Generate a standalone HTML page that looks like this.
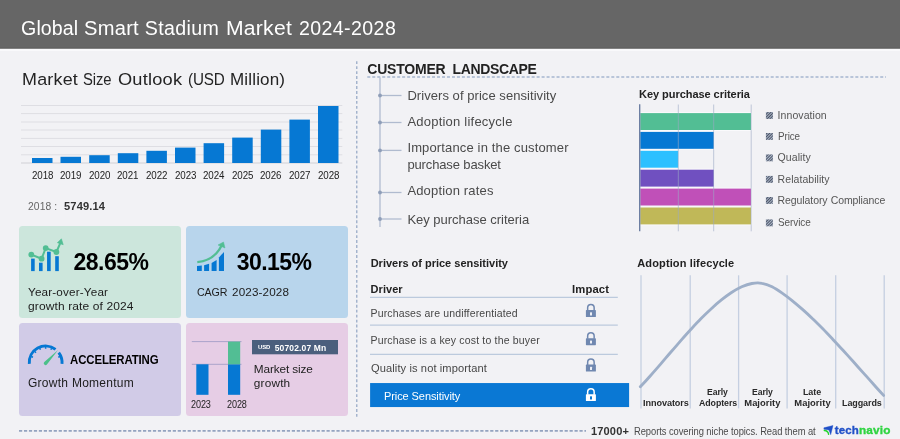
<!DOCTYPE html>
<html>
<head>
<meta charset="utf-8">
<title>Global Smart Stadium Market 2024-2028</title>
<style>
html,body{margin:0;padding:0;}
body{width:900px;height:439px;overflow:hidden;background:#f2f2f5;font-family:"Liberation Sans",sans-serif;position:relative;color:#333;}
#hdr{position:absolute;left:0;top:0;width:900px;height:48px;background:#666666;}
.t{position:absolute;white-space:nowrap;line-height:1;transform-origin:0 0;}
#txt{position:absolute;left:0;top:0;width:900px;height:439px;will-change:transform;}
svg{position:absolute;left:0;top:0;}
.card{position:absolute;border-radius:3.5px;}
</style>
</head>
<body>
<div class="card" style="left:19px;top:226px;width:162px;height:92px;background:#cce6dc;"></div>
<div class="card" style="left:186px;top:226px;width:162px;height:92px;background:#b8d5ec;"></div>
<div class="card" style="left:19px;top:323px;width:162px;height:93px;background:#d1cbe7;"></div>
<div class="card" style="left:186px;top:323px;width:162px;height:93px;background:#e6cde5;"></div>

<svg width="900" height="439" viewBox="0 0 900 439">
<defs>
<pattern id="hatch" width="2" height="2" patternUnits="userSpaceOnUse" patternTransform="rotate(-45)">
<rect width="2" height="2" fill="#b0bccf"/><rect width="2" height="1.05" fill="#4e5567"/>
</pattern>
</defs>
<rect x="0" y="0" width="900" height="48.8" fill="#666666"/>
<rect x="0" y="47.5" width="900" height="1.3" fill="#5e5e5e"/>
<rect x="0" y="48.8" width="900" height="2.2" fill="#f9f9fb"/>
<!-- market size bar chart -->
<g stroke="#dedee3" stroke-width="1">
<line x1="21" y1="105.5" x2="342.3" y2="105.5"/>
<line x1="21" y1="113.6" x2="342.3" y2="113.6"/>
<line x1="21" y1="122" x2="342.3" y2="122"/>
<line x1="21" y1="130" x2="342.3" y2="130"/>
<line x1="21" y1="138.4" x2="342.3" y2="138.4"/>
<line x1="21" y1="146.5" x2="342.3" y2="146.5"/>
<line x1="21" y1="154.8" x2="342.3" y2="154.8"/>
</g>
<line x1="21" y1="163" x2="342.3" y2="163" stroke="#cfcfd6" stroke-width="1.2"/>
<g fill="#0678d3">
<rect x="32" y="158" width="20.5" height="5"/>
<rect x="60.5" y="156.8" width="20.5" height="6.2"/>
<rect x="89.2" y="155.2" width="20.5" height="7.8"/>
<rect x="117.8" y="153.2" width="20.5" height="9.8"/>
<rect x="146.4" y="150.8" width="20.5" height="12.2"/>
<rect x="175" y="147.6" width="20.5" height="15.4"/>
<rect x="203.6" y="143.2" width="20.5" height="19.8"/>
<rect x="232.2" y="137.6" width="20.5" height="25.4"/>
<rect x="260.8" y="129.6" width="20.5" height="33.4"/>
<rect x="289.4" y="119.6" width="20.5" height="43.4"/>
<rect x="318" y="106" width="20.5" height="57"/>
</g>

<!-- dashed separators -->
<line x1="356.75" y1="61.2" x2="356.75" y2="416.7" stroke="#9fb0cb" stroke-width="1.4" stroke-dasharray="2.9 2.07"/>
<line x1="367.3" y1="77" x2="886" y2="77" stroke="#a6b6cf" stroke-width="1.3" stroke-dasharray="3 1.98"/>
<line x1="19" y1="430.9" x2="586" y2="430.9" stroke="#94a4c0" stroke-width="1.6" stroke-dasharray="3.2 1.76"/>

<!-- tree -->
<g stroke="#b0bbcf" stroke-width="1.3" fill="none">
<line x1="380" y1="77.6" x2="380" y2="227"/>
<line x1="380" y1="95.5" x2="401.5" y2="95.5"/>
<line x1="380" y1="122.5" x2="401.5" y2="122.5"/>
<line x1="380" y1="150.4" x2="401.5" y2="150.4"/>
<line x1="380" y1="192.5" x2="401.5" y2="192.5"/>
<line x1="380" y1="219" x2="401.5" y2="219"/>
</g>
<g fill="#8f9eb8">
<circle cx="380" cy="95.5" r="1.9"/><circle cx="380" cy="122.5" r="1.9"/><circle cx="380" cy="150.4" r="1.9"/><circle cx="380" cy="192.5" r="1.9"/><circle cx="380" cy="219" r="1.9"/>
</g>

<!-- key purchase criteria chart -->
<rect x="640.3" y="112.1" width="111.7" height="18.9" fill="#fafafc"/>
<rect x="640.3" y="130.9" width="74.6" height="18.9" fill="#fafafc"/>
<rect x="640.3" y="149.8" width="38.9" height="18.9" fill="#fafafc"/>
<rect x="640.3" y="168.7" width="74.6" height="18.9" fill="#fafafc"/>
<rect x="640.3" y="187.6" width="111.7" height="18.9" fill="#fafafc"/>
<rect x="640.3" y="206.5" width="111.7" height="18.9" fill="#fafafc"/>
<rect x="640.3" y="113.1" width="110.7" height="16.9" fill="#52be94"/>
<rect x="640.3" y="131.9" width="73.6" height="16.9" fill="#0678d3"/>
<rect x="640.3" y="150.8" width="37.9" height="16.9" fill="#2cc0ff"/>
<rect x="640.3" y="169.7" width="73.6" height="16.9" fill="#7050c0"/>
<rect x="640.3" y="188.6" width="110.7" height="16.9" fill="#c050b8"/>
<rect x="640.3" y="207.5" width="110.7" height="16.9" fill="#c0b858"/>
<g stroke="#9aa8c4" stroke-width="0.8" opacity="0.75">
<line x1="678.3" y1="104.5" x2="678.3" y2="231.3"/>
<line x1="713.7" y1="104.5" x2="713.7" y2="231.3"/>
<line x1="751.2" y1="104.5" x2="751.2" y2="231.3"/>
</g>
<line x1="639.7" y1="104.3" x2="639.7" y2="231.3" stroke="#66799f" stroke-width="1.3"/>
<rect x="765.9" y="112" width="7" height="6.9" fill="url(#hatch)"/><rect x="765.9" y="133" width="7" height="6.9" fill="url(#hatch)"/><rect x="765.9" y="154.4" width="7" height="6.9" fill="url(#hatch)"/><rect x="765.9" y="175.9" width="7" height="6.9" fill="url(#hatch)"/><rect x="765.9" y="197" width="7" height="6.9" fill="url(#hatch)"/><rect x="765.9" y="219.4" width="7" height="6.9" fill="url(#hatch)"/>

<!-- drivers table -->
<g stroke="#bccadd" stroke-width="1.2">
<line x1="370" y1="297.4" x2="617.8" y2="297.4"/>
<line x1="370" y1="325.2" x2="617.8" y2="325.2"/>
<line x1="370" y1="354.3" x2="617.8" y2="354.3"/>
</g>
<rect x="370.1" y="383.05" width="259" height="24" fill="#0a78d4"/>
<g transform="translate(585.9,303.8)"><path d="M1.75,6.8 V4 A3.25,3.25 0 0 1 8.25,4 V6.8" stroke="#7088b0" stroke-width="1.5" fill="none"/><rect x="0" y="6.3" width="10" height="6.9" rx="0.6" fill="#7088b0"/><rect x="4.1" y="8.4" width="2" height="3.2" rx="0.5" fill="#eef0f6"/></g>
<g transform="translate(585.9,332)"><path d="M1.75,6.8 V4 A3.25,3.25 0 0 1 8.25,4 V6.8" stroke="#7088b0" stroke-width="1.5" fill="none"/><rect x="0" y="6.3" width="10" height="6.9" rx="0.6" fill="#7088b0"/><rect x="4.1" y="8.4" width="2" height="3.2" rx="0.5" fill="#eef0f6"/></g>
<g transform="translate(585.9,358.3)"><path d="M1.75,6.8 V4 A3.25,3.25 0 0 1 8.25,4 V6.8" stroke="#7088b0" stroke-width="1.5" fill="none"/><rect x="0" y="6.3" width="10" height="6.9" rx="0.6" fill="#7088b0"/><rect x="4.1" y="8.4" width="2" height="3.2" rx="0.5" fill="#eef0f6"/></g>
<g transform="translate(585.9,387.9)"><path d="M1.75,6.8 V4 A3.25,3.25 0 0 1 8.25,4 V6.8" stroke="#ffffff" stroke-width="1.5" fill="none"/><rect x="0" y="6.3" width="10" height="6.9" rx="0.6" fill="#ffffff"/><rect x="4.1" y="8.4" width="2" height="3.2" rx="0.5" fill="#0a78d4"/></g>

<!-- adoption lifecycle -->
<g stroke="#c5cfe1" stroke-width="1.3">
<line x1="641" y1="275.3" x2="641" y2="408.4"/>
<line x1="690.2" y1="275.3" x2="690.2" y2="408.4"/>
<line x1="738.6" y1="275.3" x2="738.6" y2="408.4"/>
<line x1="787.1" y1="275.3" x2="787.1" y2="408.4"/>
<line x1="835.7" y1="275.3" x2="835.7" y2="408.4"/>
<line x1="884.2" y1="275.3" x2="884.2" y2="408.4"/>
</g>
<path d="M640.3,386.8 C643.7,383.2 647.1,379.5 650.4,375.7 C653.8,371.9 657.2,368.0 660.6,364.1 C664.0,360.2 667.3,356.2 670.7,352.3 C674.1,348.4 677.5,344.5 680.8,340.6 C684.2,336.8 687.6,333.0 691.0,329.3 C694.4,325.6 697.7,322.0 701.1,318.6 C704.5,315.1 707.9,311.8 711.3,308.7 C714.6,305.6 718.0,302.6 721.4,299.9 C724.8,297.2 728.2,294.7 731.5,292.5 C734.9,290.3 738.3,288.4 741.7,286.8 C745.1,285.3 748.4,284.1 751.8,283.5 C755.2,282.9 758.6,282.7 762.0,283.3 C765.3,283.8 768.7,285.1 772.1,286.8 C775.5,288.6 778.8,290.8 782.2,293.1 C785.6,295.5 789.0,298.0 792.4,300.8 C795.7,303.5 799.1,306.4 802.5,309.4 C805.9,312.4 809.3,315.5 812.6,318.8 C816.0,322.0 819.4,325.4 822.8,328.8 C826.2,332.3 829.5,335.8 832.9,339.4 C836.3,343.0 839.7,346.6 843.0,350.3 C846.4,354.0 849.8,357.8 853.2,361.5 C856.6,365.3 859.9,369.1 863.3,372.9 C866.7,376.6 870.1,380.4 873.5,384.2 C876.8,388.0 880.2,391.7 883.6,395.4" fill="none" stroke="#9eafc8" stroke-width="2.85" stroke-linecap="round"/>

<!-- card 4 mini chart -->
<line x1="191.8" y1="341.6" x2="241.5" y2="341.6" stroke="#aba3ca" stroke-width="1"/>
<line x1="191.8" y1="364.3" x2="241.5" y2="364.3" stroke="#aba3ca" stroke-width="1"/>
<rect x="196.3" y="364.3" width="12.2" height="30.5" fill="#0678d3"/>
<rect x="228" y="364.3" width="12.2" height="30.5" fill="#0678d3"/>
<rect x="228" y="341.6" width="12.2" height="22.7" fill="#52be94"/>
<rect x="252" y="340" width="86" height="14.3" fill="#4b5f7d"/>

<!-- card 1 icon -->
<g fill="#0678d3">
<rect x="31.1" y="258.6" width="3.6" height="12.5"/>
<rect x="39" y="262.7" width="3.6" height="8.4"/>
<rect x="47.05" y="251.7" width="3.65" height="19.4"/>
<rect x="55.2" y="256.2" width="3.6" height="14.9"/>
</g>
<polyline points="31.3,254.6 41.6,258.7 45.7,248.1 56.4,252 60.5,242.6" stroke="#52be94" stroke-width="2" fill="none" stroke-linecap="round" stroke-linejoin="round"/>
<g fill="#52be94">
<circle cx="31.3" cy="254.6" r="2.9"/><circle cx="41.6" cy="258.7" r="2.9"/><circle cx="45.7" cy="248.1" r="2.9"/><circle cx="56.4" cy="252" r="2.9"/>
<path d="M61.4,238.8 L57.4,242.8 L63.2,244.7 Z" stroke="#52be94" stroke-width="0.6" stroke-linejoin="round"/>
</g>

<!-- card 2 icon -->
<g fill="#0678d3">
<path d="M197,266.1 L201.8,265.6 L201.8,271.1 L197,271.1 Z"/>
<path d="M204.1,265.2 L209.1,263.8 L209.1,271.1 L204.1,271.1 Z"/>
<path d="M211.6,262.9 L216.6,260.1 L216.6,271.1 L211.6,271.1 Z"/>
<path d="M218.9,257.4 L224,251.9 L224,271.1 L218.9,271.1 Z"/>
</g>
<path d="M197.3,262.2 C205,261.5 212,258 216.4,253.3 C219,250.5 220.5,248 221.6,245.6" stroke="#52be94" stroke-width="2.3" fill="none" stroke-linecap="butt"/>
<path d="M223.5,242 L218,245 L225,248 Z" fill="#52be94" stroke="#52be94" stroke-width="0.5" stroke-linejoin="round"/>

<!-- card 3 gauge icon -->
<path d="M29.31,363.88 A16.4,16.4 0 0 1 55.52,349.35 M58.75,352.58 A16.4,16.4 0 0 1 61.99,363.88" stroke="#0678d3" stroke-width="2.9" fill="none"/>
<g stroke="#0678d3" stroke-width="1.5"><line x1="31.42" y1="356.56" x2="32.99" y2="357.21"/><line x1="34.76" y1="351.56" x2="35.96" y2="352.76"/><line x1="39.76" y1="348.22" x2="40.41" y2="349.79"/><line x1="45.65" y1="347.05" x2="45.65" y2="348.75"/><line x1="51.54" y1="348.22" x2="50.89" y2="349.79"/><line x1="59.88" y1="356.56" x2="58.31" y2="357.21"/></g>
<path d="M44.3,361.9 L58.1,350 L46.9,364.5 A1.8,1.8 0 0 1 44.3,361.9 Z" fill="#4cc08a"/>

<!-- technavio icon -->
<path d="M823.9,427.8 L833,425.5 L830.7,434.7 L829,430 L823.9,429.3 Z" fill="#1f4fc8" stroke="#1f4fc8" stroke-width="0.4" stroke-linejoin="round"/>
<path d="M824.3,430.5 Q828.1,430.7 828.6,434.3" stroke="#25d62e" stroke-width="1.4" fill="none" stroke-linecap="round"/>
</svg>

<div id="txt">
<div class="t" style="left:21.10px;top:19.00px;font-size:19.6px;color:#fff;letter-spacing:0.052px;">Global</div>
<div class="t" style="left:84.20px;top:19.00px;font-size:19.6px;color:#fff;letter-spacing:0.261px;transform:scaleX(1.0261);">Smart</div>
<div class="t" style="left:144.70px;top:19.00px;font-size:19.6px;color:#fff;letter-spacing:0.385px;">Stadium</div>
<div class="t" style="left:226.40px;top:19.00px;font-size:19.6px;color:#fff;letter-spacing:0.240px;transform:scaleX(1.0771);">Market</div>
<div class="t" style="left:298.90px;top:19.00px;font-size:19.6px;color:#fff;letter-spacing:0.400px;">2024-2028</div>
<div class="t" style="left:21.50px;top:71.00px;font-size:16.3px;color:#242424;letter-spacing:0.199px;transform:scaleX(1.0993);">Market</div>
<div class="t" style="left:83.30px;top:71.00px;font-size:16.3px;color:#242424;letter-spacing:-0.158px;transform:scaleX(0.9099);">Size</div>
<div class="t" style="left:117.70px;top:71.00px;font-size:16.3px;color:#242424;letter-spacing:0.187px;transform:scaleX(1.1180);">Outlook</div>
<div class="t" style="left:188.30px;top:71.00px;font-size:16.3px;color:#242424;letter-spacing:-0.199px;transform:scaleX(0.9362);">(USD</div>
<div class="t" style="left:230.00px;top:71.00px;font-size:16.3px;color:#242424;letter-spacing:0.147px;transform:scaleX(1.0454);">Million)</div>
<div class="t" style="left:31.55px;top:171.00px;font-size:10px;color:#222;letter-spacing:-0.111px;transform:scaleX(0.9764);">2018</div>
<div class="t" style="left:60.15px;top:171.00px;font-size:10px;color:#222;letter-spacing:-0.111px;transform:scaleX(0.9764);">2019</div>
<div class="t" style="left:88.75px;top:171.00px;font-size:10px;color:#222;letter-spacing:-0.111px;transform:scaleX(0.9764);">2020</div>
<div class="t" style="left:117.35px;top:171.00px;font-size:10px;color:#222;letter-spacing:-0.111px;transform:scaleX(0.9764);">2021</div>
<div class="t" style="left:145.95px;top:171.00px;font-size:10px;color:#222;letter-spacing:-0.111px;transform:scaleX(0.9764);">2022</div>
<div class="t" style="left:174.55px;top:171.00px;font-size:10px;color:#222;letter-spacing:-0.111px;transform:scaleX(0.9764);">2023</div>
<div class="t" style="left:203.15px;top:171.00px;font-size:10px;color:#222;letter-spacing:-0.111px;transform:scaleX(0.9764);">2024</div>
<div class="t" style="left:231.75px;top:171.00px;font-size:10px;color:#222;letter-spacing:-0.111px;transform:scaleX(0.9764);">2025</div>
<div class="t" style="left:260.35px;top:171.00px;font-size:10px;color:#222;letter-spacing:-0.111px;transform:scaleX(0.9764);">2026</div>
<div class="t" style="left:288.95px;top:171.00px;font-size:10px;color:#222;letter-spacing:-0.111px;transform:scaleX(0.9764);">2027</div>
<div class="t" style="left:317.55px;top:171.00px;font-size:10px;color:#222;letter-spacing:-0.111px;transform:scaleX(0.9764);">2028</div>
<div class="t" style="left:28.40px;top:202.00px;font-size:10px;color:#666;letter-spacing:0.111px;transform:scaleX(1.0293);">2018 :</div>
<div class="t" style="left:63.60px;top:202.00px;font-size:10px;color:#333;letter-spacing:0.121px;transform:scaleX(1.1117);font-weight:bold;">5749.14</div>
<div class="t" style="left:73.40px;top:251.00px;font-size:23px;color:#000;letter-spacing:-0.483px;font-weight:bold;">28.65%</div>
<div class="t" style="left:28.00px;top:286.00px;font-size:11.7px;color:#1c1c1c;letter-spacing:0.173px;">Year-over-Year</div>
<div class="t" style="left:28.00px;top:300.00px;font-size:11.7px;color:#1c1c1c;letter-spacing:0.112px;transform:scaleX(1.0269);">growth rate of 2024</div>
<div class="t" style="left:236.70px;top:251.00px;font-size:23px;color:#000;letter-spacing:-0.543px;font-weight:bold;">30.15%</div>
<div class="t" style="left:196.70px;top:286.00px;font-size:11.7px;color:#1c1c1c;letter-spacing:-0.169px;transform:scaleX(0.9136);">CAGR</div>
<div class="t" style="left:232.10px;top:286.00px;font-size:11.7px;color:#1c1c1c;letter-spacing:0.124px;">2023-2028</div>
<div class="t" style="left:70.20px;top:354.00px;font-size:12.5px;color:#000;letter-spacing:-0.134px;transform:scaleX(0.9142);font-weight:bold;">ACCELERATING</div>
<div class="t" style="left:28.00px;top:377.00px;font-size:12px;color:#1c1c1c;letter-spacing:0.269px;">Growth Momentum</div>
<div class="t" style="left:258.00px;top:344.00px;font-size:6.2px;color:#fff;letter-spacing:-0.098px;transform:scaleX(0.9626);font-weight:bold;">USD</div>
<div class="t" style="left:274.70px;top:344.00px;font-size:8.5px;color:#fff;letter-spacing:0.151px;font-weight:bold;">50702.07 Mn</div>
<div class="t" style="left:253.80px;top:364.00px;font-size:11.8px;color:#222;letter-spacing:-0.121px;">Market size</div>
<div class="t" style="left:253.80px;top:378.00px;font-size:11.8px;color:#222;letter-spacing:0.196px;">growth</div>
<div class="t" style="left:191.40px;top:400.00px;font-size:10.2px;color:#222;letter-spacing:-0.113px;transform:scaleX(0.8911);">2023</div>
<div class="t" style="left:226.80px;top:400.00px;font-size:10.2px;color:#222;letter-spacing:-0.113px;transform:scaleX(0.8911);">2028</div>
<div class="t" style="left:367.30px;top:62.00px;font-size:14px;color:#222;letter-spacing:-0.208px;font-weight:bold;">CUSTOMER</div>
<div class="t" style="left:452.50px;top:62.00px;font-size:14px;color:#222;letter-spacing:-0.353px;font-weight:bold;">LANDSCAPE</div>
<div class="t" style="left:407.40px;top:89.00px;font-size:13px;color:#4a4a4a;letter-spacing:0.056px;">Drivers of price sensitivity</div>
<div class="t" style="left:407.40px;top:115.00px;font-size:13px;color:#4a4a4a;letter-spacing:0.225px;">Adoption lifecycle</div>
<div class="t" style="left:407.40px;top:141.00px;font-size:13px;color:#4a4a4a;letter-spacing:0.143px;">Importance in the customer</div>
<div class="t" style="left:407.40px;top:158.00px;font-size:13px;color:#4a4a4a;letter-spacing:-0.129px;">purchase basket</div>
<div class="t" style="left:407.40px;top:184.00px;font-size:13px;color:#4a4a4a;letter-spacing:0.166px;">Adoption rates</div>
<div class="t" style="left:407.40px;top:213.00px;font-size:13px;color:#4a4a4a;letter-spacing:-0.016px;">Key purchase criteria</div>
<div class="t" style="left:639.00px;top:89.00px;font-size:11px;color:#222;letter-spacing:-0.045px;font-weight:bold;">Key purchase criteria</div>
<div class="t" style="left:777.60px;top:110.00px;font-size:10.5px;color:#555;letter-spacing:0.070px;">Innovation</div>
<div class="t" style="left:777.60px;top:131.00px;font-size:10.5px;color:#555;letter-spacing:-0.090px;transform:scaleX(0.9373);">Price</div>
<div class="t" style="left:777.60px;top:152.00px;font-size:10.5px;color:#555;letter-spacing:0.069px;">Quality</div>
<div class="t" style="left:777.60px;top:174.00px;font-size:10.5px;color:#555;letter-spacing:0.058px;">Relatability</div>
<div class="t" style="left:777.60px;top:195.00px;font-size:10.5px;color:#555;letter-spacing:-0.087px;">Regulatory</div>
<div class="t" style="left:830.70px;top:195.00px;font-size:10.5px;color:#555;letter-spacing:-0.084px;">Compliance</div>
<div class="t" style="left:777.60px;top:217.00px;font-size:10.5px;color:#555;letter-spacing:-0.088px;transform:scaleX(0.9481);">Service</div>
<div class="t" style="left:370.70px;top:258.00px;font-size:11px;color:#222;letter-spacing:-0.010px;font-weight:bold;">Drivers of price sensitivity</div>
<div class="t" style="left:370.60px;top:284.00px;font-size:11px;color:#222;letter-spacing:0.041px;font-weight:bold;">Driver</div>
<div class="t" style="left:572.00px;top:284.00px;font-size:11px;color:#222;letter-spacing:0.142px;transform:scaleX(1.0227);font-weight:bold;">Impact</div>
<div class="t" style="left:370.50px;top:308.00px;font-size:10.5px;color:#464646;letter-spacing:0.151px;">Purchases are undifferentiated</div>
<div class="t" style="left:370.50px;top:335.00px;font-size:10.5px;color:#464646;letter-spacing:0.170px;">Purchase is a key cost to the buyer</div>
<div class="t" style="left:370.50px;top:363.00px;font-size:10.5px;color:#464646;letter-spacing:0.093px;transform:scaleX(1.0581);">Quality is not important</div>
<div class="t" style="left:383.50px;top:391.00px;font-size:11.5px;color:#fff;letter-spacing:-0.076px;transform:scaleX(0.9543);">Price Sensitivity</div>
<div class="t" style="left:637.30px;top:258.00px;font-size:11px;color:#222;letter-spacing:0.126px;font-weight:bold;">Adoption lifecycle</div>
<div class="t" style="left:643.00px;top:398.00px;font-size:9.4px;color:#2a2a2a;letter-spacing:-0.080px;transform:scaleX(0.9721);font-weight:bold;">Innovators</div>
<div class="t" style="left:707.00px;top:387.00px;font-size:9.4px;color:#2a2a2a;letter-spacing:-0.086px;transform:scaleX(0.9206);font-weight:bold;">Early</div>
<div class="t" style="left:698.50px;top:398.00px;font-size:9.4px;color:#2a2a2a;letter-spacing:-0.088px;transform:scaleX(0.9423);font-weight:bold;">Adopters</div>
<div class="t" style="left:752.00px;top:387.00px;font-size:9.4px;color:#2a2a2a;letter-spacing:-0.086px;transform:scaleX(0.9206);font-weight:bold;">Early</div>
<div class="t" style="left:744.30px;top:398.00px;font-size:9.4px;color:#2a2a2a;letter-spacing:0.021px;font-weight:bold;">Majority</div>
<div class="t" style="left:803.20px;top:387.00px;font-size:9.4px;color:#2a2a2a;letter-spacing:-0.096px;transform:scaleX(0.9530);font-weight:bold;">Late</div>
<div class="t" style="left:794.30px;top:398.00px;font-size:9.4px;color:#2a2a2a;letter-spacing:0.050px;font-weight:bold;">Majority</div>
<div class="t" style="left:841.60px;top:398.00px;font-size:9.4px;color:#2a2a2a;letter-spacing:-0.090px;transform:scaleX(0.9574);font-weight:bold;">Laggards</div>
<div class="t" style="left:591.30px;top:426.00px;font-size:10.5px;color:#333;letter-spacing:0.141px;transform:scaleX(1.0513);font-weight:bold;">17000+</div>
<div class="t" style="left:633.70px;top:427.00px;font-size:10.2px;color:#4a4a4a;letter-spacing:-0.072px;transform:scaleX(0.9202);">Reports covering niche topics. Read them at</div>
<div class="t" style="left:834.80px;top:425.00px;font-size:11.5px;color:#2252c8;letter-spacing:0.148px;font-weight:bold;-webkit-text-stroke:0.35px #2252c8;">tech</div>
<div class="t" style="left:858.90px;top:425.00px;font-size:11.5px;color:#2fd441;letter-spacing:0.150px;transform:scaleX(1.0245);font-weight:bold;-webkit-text-stroke:0.35px #2fd441;">navio</div>
</div>
</body>
</html>
